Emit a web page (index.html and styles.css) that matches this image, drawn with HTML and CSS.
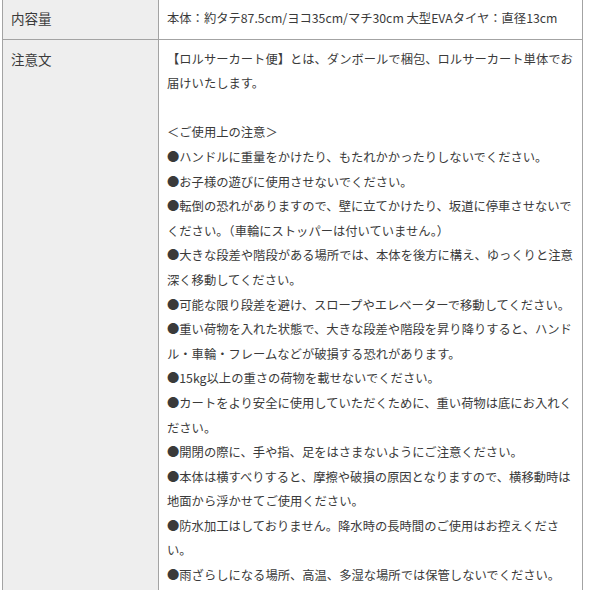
FILE: index.html
```html
<!DOCTYPE html>
<html lang="ja">
<head>
  <meta charset="UTF-8" />
  <meta name="viewport" content="width=device-width, initial-scale=1.0" />
  <title>商品仕様</title>
  <link rel="stylesheet" href="styles.css">
</head>
<body>

<table class="spec">
  <tr>
    <th>内容量</th>
    <td>本体：約タテ87.5cm/ヨコ35cm/マチ30cm 大型EVAタイヤ：直径13cm</td>
  </tr>
  <tr>
    <th>注意文</th>
    <td class="notes">
      <p>【ロルサーカート便】とは、ダンボールで梱包、ロルサーカート単体でお届けいたします。</p>
      <p class="blank">&nbsp;</p>
      <p>＜ご使用上の注意＞</p>
      <p>●ハンドルに重量をかけたり、もたれかかったりしないでください。</p>
      <p>●お子様の遊びに使用させないでください。</p>
      <p>●転倒の恐れがありますので、壁に立てかけたり、坂道に停車させないでください。（車輪にストッパーは付いていません。）</p>
      <p>●大きな段差や階段がある場所では、本体を後方に構え、ゆっくりと注意深く移動してください。</p>
      <p>●可能な限り段差を避け、スロープやエレベーターで移動してください。</p>
      <p>●重い荷物を入れた状態で、大きな段差や階段を昇り降りすると、ハンドル・車輪・フレームなどが破損する恐れがあります。</p>
      <p>●15kg以上の重さの荷物を載せないでください。</p>
      <p>●カートをより安全に使用していただくために、重い荷物は底にお入れください。</p>
      <p>●開閉の際に、手や指、足をはさまないようにご注意ください。</p>
      <p>●本体は横すべりすると、摩擦や破損の原因となりますので、横移動時は地面から浮かせてご使用ください。</p>
      <p>●防水加工はしておりません。降水時の長時間のご使用はお控えください。</p>
      <p>●雨ざらしになる場所、高温、多湿な場所では保管しないでください。</p>
    </td>
  </tr>
</table>

</body>
</html>
```

FILE: styles.css
```css
body {
  font-family: "Noto Sans CJK JP", "Noto Sans", sans-serif;
  background-color: #ffffff;
  color: #3a3a3a;
  margin: 0;
  padding: 0;
}
.spec {
  border-collapse: collapse;
  width: 581px;
  margin: -2px 0 0 2px;
  table-layout: fixed;
}
.spec th,
.spec td {
  border: 1px solid #a3a3a3;
  vertical-align: top;
  text-align: left;
  line-height: 24.6px;
  padding: 7px 8px 8px 8px;
}
.spec th {
  width: 139px;
  background-color: #eeeeee;
  font-weight: normal;
  font-size: 13.5px;
}
.spec td {
  font-size: 12.3px;
  word-break: break-all;
}
.spec p {
  margin: 0;
}
```
